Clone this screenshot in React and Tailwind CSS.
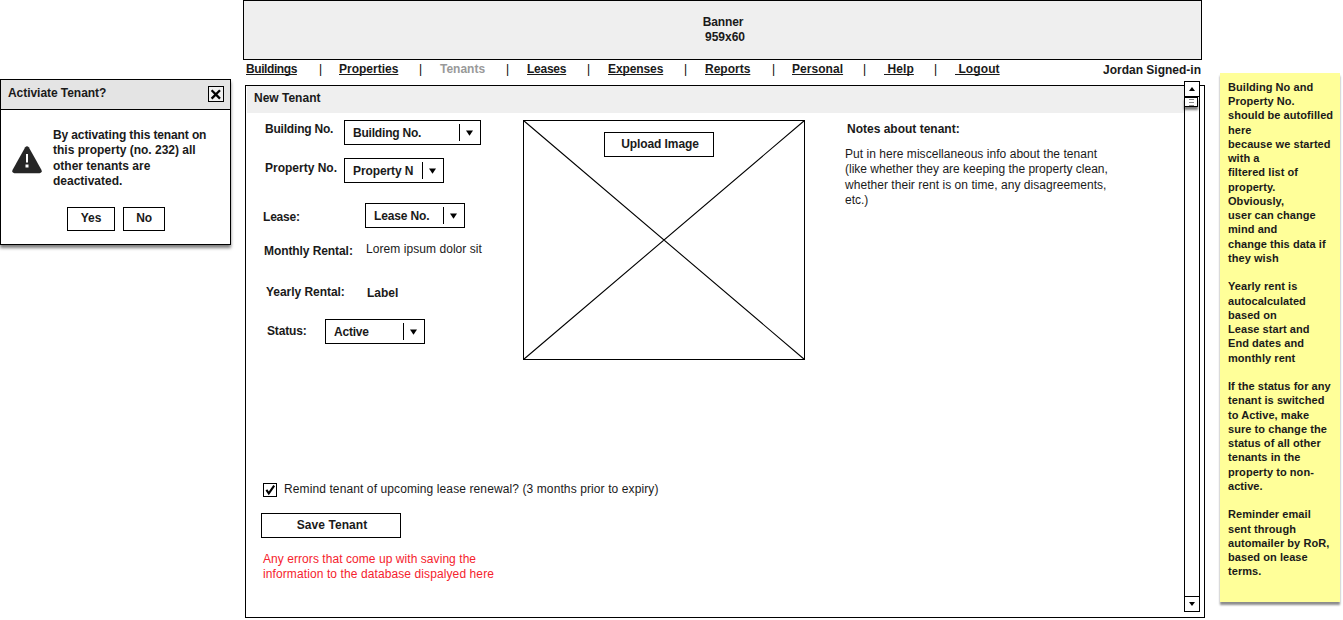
import React from 'react';

const NAV = [
  { text: 'Buildings', cls: 'w-[73px] tracking-[-0.42px]' },
  { text: 'Properties', cls: 'w-[80px]' },
  { text: 'Tenants', cls: 'w-[66px]', current: true },
  { text: 'Leases', cls: 'w-[60px] tracking-[-0.25px]' },
  { text: 'Expenses', cls: 'w-[76px] tracking-[-0.1px]' },
  { text: 'Reports', cls: 'w-[67px]' },
  { text: 'Personal', cls: 'w-[71px] tracking-[0.05px]' },
  { text: '\u00a0Help', cls: 'w-[50px] tracking-[0.1px]' },
  { text: '\u00a0Logout', cls: 'w-[46px] tracking-[0.1px]' },
];

const PIPES = ['w-[20px]', 'w-[21px]', 'w-[21px]', 'w-[21px]', 'w-[21px]', 'w-[20px]', 'w-[21px]', 'w-[21px]'];

const STICKY = [
  'Building No and', 'Property No.', 'should be autofilled', 'here', 'because we started', 'with a',
  'filtered list of', 'property.', 'Obviously,', 'user can change', 'mind and', 'change this data if',
  'they wish', '', 'Yearly rent is', 'autocalculated', 'based on', 'Lease start and', 'End dates and',
  'monthly rent', '', 'If the status for any', 'tenant is switched', 'to Active, make', 'sure to change the',
  'status of all other', 'tenants in the', 'property to non-', 'active.', '', 'Reminder email', 'sent through',
  'automailer by RoR,', 'based on lease', 'terms.',
];

function Select({ text, cls = '', textCls = '' }) {
  return (
    <div className={'flex h-[25px] shrink-0 border border-black bg-white ' + cls}>
      <span className={'ml-[8px] mt-[5px] min-w-0 flex-1 whitespace-nowrap ' + textCls}>{text}</span>
      <span className="mt-[3px] h-[17px] w-px bg-black" />
      <svg className="mt-[9px] ml-[6px] mr-[6px] h-[6px] w-[8px]" viewBox="0 0 8 6">
        <path d="M0 0.4h7L3.5 5.8z" fill="#000" />
      </svg>
    </div>
  );
}

function Dialog() {
  return (
    <section className="mt-[79px] h-[166px] w-[231px] shrink-0 border border-black bg-white shadow-[0_3px_3px_rgba(0,0,0,0.5)]">
      <header className="flex h-[30px] justify-between border-b border-black bg-[#e4e4e4] pl-[7px] pr-[6px]">
        <h2 className="mt-[6px] tracking-[-0.05px]">Activiate Tenant?</h2>
        <button className="mt-[6px] flex h-[16px] w-[16px] items-center justify-center border border-black bg-[#f0f0f0]">
          <svg className="h-[14px] w-[14px]" viewBox="0 0 14 14">
            <path d="M2.6 3.2L11 11.6M11 3.2L2.6 11.6" stroke="#000" strokeWidth="2.3" />
          </svg>
        </button>
      </header>
      <div className="flex h-[97px]">
        <svg className="ml-[11px] mt-[36px] h-[28px] w-[30px] shrink-0" viewBox="0 0 30 28">
          <path d="M13.2 1.2Q15 -0.8 16.8 1.2L29.5 24Q30.4 27 27.6 27.2H2.4Q-0.4 27 0.5 24Z" fill="#262626" />
          <rect x="14" y="8" width="2" height="8.5" fill="#fff" />
          <rect x="13.5" y="18.5" width="3" height="3" fill="#fff" />
        </svg>
        <p className="ml-[11px] mt-[18px] whitespace-nowrap leading-[15.4px]">
          <span className="tracking-[-0.12px]">By activating this tenant on</span><br />
          this property (no. 232) all<br />
          other tenants are<br />
          deactivated.
        </p>
      </div>
      <div className="flex gap-[8px] pl-[66px]">
        <button className="h-[24px] w-[48px] border border-black bg-white pb-[2px]">Yes</button>
        <button className="h-[24px] w-[42px] border border-black bg-white pb-[2px] tracking-[-0.3px]">No</button>
      </div>
    </section>
  );
}

function Nav() {
  return (
    <nav className="flex h-[25px] pl-[3px]">
      {NAV.map((n, i) => (
        <React.Fragment key={n.text}>
          <span className={'mt-[2px] shrink-0 whitespace-nowrap ' + n.cls}>
            <a className={n.current ? 'text-[#999]' : 'underline decoration-1 underline-offset-[1px] [text-decoration-skip-ink:none]'}>{n.text}</a>
          </span>
          {i < PIPES.length && <span className={'mt-[2px] shrink-0 font-normal text-black ' + PIPES[i]}>|</span>}
        </React.Fragment>
      ))}
      <span className="ml-auto mt-[3px] whitespace-nowrap pr-[4px]">Jordan Signed-in</span>
    </nav>
  );
}

function Form() {
  return (
    <div className="w-[277px] shrink-0 whitespace-nowrap">
      <div className="flex h-[38px]">
        <span className="mt-[2px] w-[98px] shrink-0 pl-[19px] tracking-[-0.2px]">Building No.</span>
        <Select text="Building No." cls="w-[137px]" textCls="tracking-[-0.2px]" />
      </div>
      <div className="flex h-[45px]">
        <span className="mt-[3px] w-[98px] shrink-0 pl-[19px]">Property No.</span>
        <Select text="Property N" cls="w-[100px]" textCls="tracking-[-0.1px]" />
      </div>
      <div className="flex h-[39px]">
        <span className="mt-[7px] w-[119px] shrink-0 pl-[17px] tracking-[-0.2px]">Lease:</span>
        <Select text="Lease No." cls="w-[100px]" textCls="tracking-[-0.15px]" />
      </div>
      <div className="flex h-[43px]">
        <span className="mt-[2px] w-[120px] shrink-0 pl-[18px] tracking-[-0.08px]">Monthly Rental:</span>
        <span className="font-normal tracking-[0.06px]">Lorem ipsum dolor sit</span>
      </div>
      <div className="flex h-[34px]">
        <span className="w-[121px] shrink-0 pl-[20px] tracking-[-0.04px]">Yearly Rental:</span>
        <span className="mt-[1px]">Label</span>
      </div>
      <div className="flex h-[164px]">
        <span className="mt-[5px] w-[79px] shrink-0 pl-[21px] tracking-[-0.15px]">Status:</span>
        <Select text="Active" cls="w-[100px]" textCls="tracking-[-0.2px]" />
      </div>
      <label className="flex h-[30px] pl-[17px] font-normal">
        <svg className="h-[14px] w-[14px] shrink-0" viewBox="0 0 14 14">
          <rect x="0.5" y="0.5" width="13" height="13" fill="#fff" stroke="#000" />
          <path d="M3.4 6.8L5.8 10.4L11.2 2.6" fill="none" stroke="#000" strokeWidth="2.1" />
        </svg>
        <span className="ml-[7px] -mt-px tracking-[0.105px]">Remind tenant of upcoming lease renewal? (3 months prior to expiry)</span>
      </label>
      <button className="ml-[15px] h-[25px] w-[140px] border border-black bg-white pb-[2px] pl-[2px] tracking-[0.08px]">Save Tenant</button>
      <p className="ml-[17px] mt-[14px] font-normal leading-[15px] text-[#f5222d]">
        <span className="tracking-[0.06px]">Any errors that come up with saving the</span><br />
        <span className="tracking-[0.1px]">information to the database dispalyed here</span>
      </p>
    </div>
  );
}

function ImageBox() {
  return (
    <div className="grid h-[240px] w-[282px] shrink-0">
      <svg className="col-start-1 row-start-1 h-[240px] w-[282px]" viewBox="0 0 282 240">
        <rect x="0.5" y="0.5" width="281" height="239" fill="#fff" stroke="#000" shapeRendering="crispEdges" />
        <path d="M0.5 0.5L281.5 239.5M281.5 0.5L0.5 239.5" stroke="#000" strokeWidth="1.1" />
      </svg>
      <button className="z-10 col-start-1 row-start-1 ml-[81px] mt-[12px] h-[25px] w-[110px] border border-black bg-white pb-[2px] pl-[2px] tracking-[-0.09px]">Upload Image</button>
    </div>
  );
}

function Scrollbar() {
  return (
    <div className="-mt-[5px] flex h-[531px] w-[16px] shrink-0 flex-col border border-black bg-white">
      <div className="flex h-[15px] shrink-0 items-center justify-center border-b border-black">
        <svg className="h-[4px] w-[6px]" viewBox="0 0 6 4"><path d="M3 0L6 4H0z" fill="#000" /></svg>
      </div>
      <div className="-ml-px flex h-[10px] w-[14px] shrink-0 flex-col items-center justify-center gap-[2px] border border-black bg-white shadow-[0_3px_2px_rgba(0,0,0,0.5)]">
        <span className="h-px w-[5px] bg-[#888]" />
        <span className="h-px w-[5px] bg-[#888]" />
        <span className="h-px w-[5px] bg-[#888]" />
      </div>
      <div className="mt-auto flex h-[15px] shrink-0 items-center justify-center border-t border-black">
        <svg className="h-[4px] w-[6px]" viewBox="0 0 6 4"><path d="M0 0H6L3 4z" fill="#000" /></svg>
      </div>
    </div>
  );
}

export default function App() {
  return (
    <div className="flex h-[620px] w-[1343px] overflow-hidden bg-white font-['Liberation_Sans',Arial,sans-serif] text-[12px] font-bold leading-[14px] text-[#1a1a1a]">
      <Dialog />
      <main className="ml-[12px] w-[962px] shrink-0">
        <div className="flex h-[60px] w-[959px] flex-col items-center border border-black bg-[#efefef] pt-[14px] leading-[15px]">
          <span className="pl-px tracking-[-0.15px]">Banner</span>
          <span className="pl-[5px]">959x60</span>
        </div>
        <Nav />
        <section className="ml-[2px] flex h-[533px] w-[960px] border border-black">
          <div className="w-[938px] shrink-0">
            <h1 className="ml-px h-[27px] bg-[#efefef] pl-[7px] pt-[5px]">New Tenant</h1>
            <div className="flex pt-[7px]">
              <Form />
              <ImageBox />
              <div className="ml-[40px] pt-[2px]">
                <h2 className="ml-[2px]">Notes about tenant:</h2>
                <p className="mt-[11px] whitespace-nowrap font-normal leading-[15.4px]">
                  <span className="tracking-[0.04px]">Put in here miscellaneous info about the tenant</span><br />
                  (like whether they are keeping the property clean,<br />
                  <span className="tracking-[0.04px]">whether their rent is on time, any disagreements,</span><br />
                  etc.)
                </p>
              </div>
            </div>
          </div>
          <Scrollbar />
        </section>
      </main>
      <aside className="ml-[15px] mt-[73px] h-[529px] w-[120px] shrink-0 whitespace-nowrap bg-[#ffff99] pl-[8px] pt-[6.75px] text-[11px] leading-[14.25px] tracking-[0.06px] shadow-[0_3px_2px_rgba(0,0,0,0.45)]">
        {STICKY.map((line, i) => (
          <div key={i} className="h-[14.25px]">{line}</div>
        ))}
      </aside>
    </div>
  );
}
